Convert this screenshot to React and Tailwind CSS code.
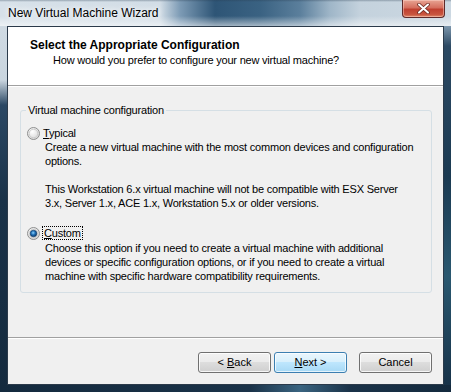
import React from "react";

const F = "[font-family:'Liberation_Sans',Arial,sans-serif]";

function Radio({ checked }) {
  return (
    <svg width="13" height="13" viewBox="0 0 13 13" className="shrink-0">
      <defs>
        <radialGradient id={checked ? "rgc" : "rgu"} cx="0.4" cy="0.35" r="0.7">
          <stop offset="0" stopColor="#ffffff" />
          <stop offset="1" stopColor="#d4d4d4" />
        </radialGradient>
        <radialGradient id="dot" cx="0.45" cy="0.4" r="0.6">
          <stop offset="0" stopColor="#8cd2ff" />
          <stop offset="0.5" stopColor="#1f6fb5" />
          <stop offset="1" stopColor="#0b3a6e" />
        </radialGradient>
      </defs>
      <circle cx="6.5" cy="6.5" r="6" fill={`url(#${checked ? "rgc" : "rgu"})`} stroke="#8e8f8f" strokeWidth="1" />
      <circle cx="6.5" cy="6.5" r="4.3" fill="none" stroke="#c4c4c4" strokeWidth="0.8" />
      {checked && <circle cx="6.5" cy="6.5" r="3.3" fill="url(#dot)" stroke="#0f3b66" strokeWidth="0.6" />}
    </svg>
  );
}

function Button({ children, primary, className = "" }) {
  return (
    <div
      className={`w-[73px] h-[21px] rounded-[3px] border flex items-center justify-center text-[11px] text-black ${
        primary
          ? "border-[#3c7fb1] [background:linear-gradient(180deg,#eaf6fd_0%,#d9f0fc_45%,#bee6fd_50%,#a7d9f5_100%)] shadow-[inset_0_0_0_1px_rgba(255,255,255,0.7)]"
          : "border-[#707070] [background:linear-gradient(180deg,#f2f2f2_0%,#ebebeb_45%,#dddddd_50%,#cfcfcf_100%)] shadow-[inset_0_0_0_1px_rgba(255,255,255,0.8)]"
      } ${className}`}
    >
      {children}
    </div>
  );
}

export default function App() {
  return (
    <div
      className={`${F} w-[451px] h-[392px] flex flex-col overflow-hidden text-black [background:linear-gradient(180deg,#d3dde5_0px,#c9d5df_80px,#2b4864_105px,#1a3248_200px,#142a3e_392px)]`}
    >
      {/* Title bar */}
      <div className="h-[26px] shrink-0 flex items-start justify-between [background:linear-gradient(180deg,rgba(40,60,80,0.35)_0px,rgba(0,0,0,0)_2px,rgba(0,0,0,0)_16px,rgba(255,255,255,0.55)_26px),linear-gradient(90deg,#d7e1e9_0px,#d2dde6_160px,#7d9bb5_180px,#2e5576_215px,#3a6282_260px,#5b7f9c_300px,#9fb6c8_330px,#c4d2dd_360px,#ccd8e2_451px)]">
        <div className="pl-[8px] pt-[6px] text-[12px] leading-[14px] [text-shadow:0_0_5px_#ffffff,0_0_8px_#ffffff]">
          New Virtual Machine Wizard
        </div>
        <div className="mr-[6px] w-[43px] h-[18px] rounded-b-[4px] border border-t-0 border-[#5e2a2a] flex items-center justify-center [background:linear-gradient(180deg,#e8a493_0%,#d56f5f_45%,#c04030_55%,#c8553f_85%,#e08a6a_100%)] shadow-[inset_0_0_0_1px_rgba(255,220,210,0.45)]">
          <svg width="13" height="11" viewBox="0 0 13 11">
            <path d="M2 1.5 L11 9.5 M11 1.5 L2 9.5" stroke="#6b2a22" strokeWidth="3.6" strokeLinecap="round" />
            <path d="M2 1.5 L11 9.5 M11 1.5 L2 9.5" stroke="#ffffff" strokeWidth="2" strokeLinecap="round" />
          </svg>
        </div>
      </div>

      {/* Middle row with side frames */}
      <div className="flex-1 flex min-h-0">
        <div className="w-[7px] shrink-0" />
        <div className="flex-1 flex flex-col border border-[#2b3a4a] bg-[#f0f0f0] min-w-0">
          {/* Header */}
          <div className="h-[59px] shrink-0 bg-white border-b border-[#a0a0a0] pt-[11px]">
            <div className="pl-[22px] text-[12px] leading-[14px] font-bold">
              Select the Appropriate Configuration
            </div>
            <div className="pl-[45px] text-[11px] leading-[14px] mt-[1px] tracking-[-0.2px]">
              How would you prefer to configure your new virtual machine?
            </div>
          </div>
          <div className="h-px bg-white shrink-0" />

          {/* Body */}
          <div className="flex-1 min-h-0">
            <fieldset className="mt-[16px] ml-[12px] mr-[11px] border border-[#d5dfe5] rounded-[3px] pb-[9px] text-[11px] leading-[14px] tracking-[-0.2px]">
              <legend className="ml-[5px] px-[2px]">Virtual machine configuration</legend>
              <div className="mt-[9px] pl-[6px] flex items-center h-[14px]">
                <Radio />
                <span className="ml-[2px] px-px">
                  <span className="underline">T</span>ypical
                </span>
              </div>
              <div className="pl-[24px] whitespace-nowrap">
                <p>
                  Create a new virtual machine with the most common devices and configuration
                  <br />
                  options.
                </p>
                <p className="mt-[14px]">
                  This Workstation 6.x virtual machine will not be compatible with ESX Server
                  <br />
                  3.x, Server 1.x, ACE 1.x, Workstation 5.x or older versions.
                </p>
              </div>
              <div className="mt-[16px] pl-[6px] flex items-center h-[14px]">
                <Radio checked />
                <span className="ml-[2px] px-px border border-dotted border-black leading-[12px]">
                  <span className="underline">C</span>ustom
                </span>
              </div>
              <div className="pl-[24px] mt-px whitespace-nowrap">
                <p>
                  Choose this option if you need to create a virtual machine with additional
                  <br />
                  devices or specific configuration options, or if you need to create a virtual
                  <br />
                  machine with specific hardware compatibility requirements.
                </p>
              </div>
            </fieldset>
          </div>

          {/* Footer */}
          <div className="h-[47px] shrink-0 border-t border-[#a0a0a0]">
            <div className="h-px bg-white" />
            <div className="pt-[13px] pr-[11px] flex justify-end">
              <Button className="w-[72px]">
                &lt; <span className="underline ml-[3px]">B</span>ack
              </Button>
              <Button primary className="ml-[3px] w-[72px]">
                <span className="underline">N</span>ext &gt;
              </Button>
              <Button className="ml-[12px]">Cancel</Button>
            </div>
          </div>
        </div>
        <div className="w-[7px] shrink-0 [background:linear-gradient(180deg,#7d97ad_0px,#2d4a64_20px,#1b3a52_150px,#2a5870_250px,#163047_366px)]" />
      </div>
      <div className="h-[7px] shrink-0 [background:linear-gradient(90deg,#142a3e_0px,#1a3248_250px,#3a6480_300px,#1a3248_350px,#142a3e_451px)]" />
    </div>
  );
}
